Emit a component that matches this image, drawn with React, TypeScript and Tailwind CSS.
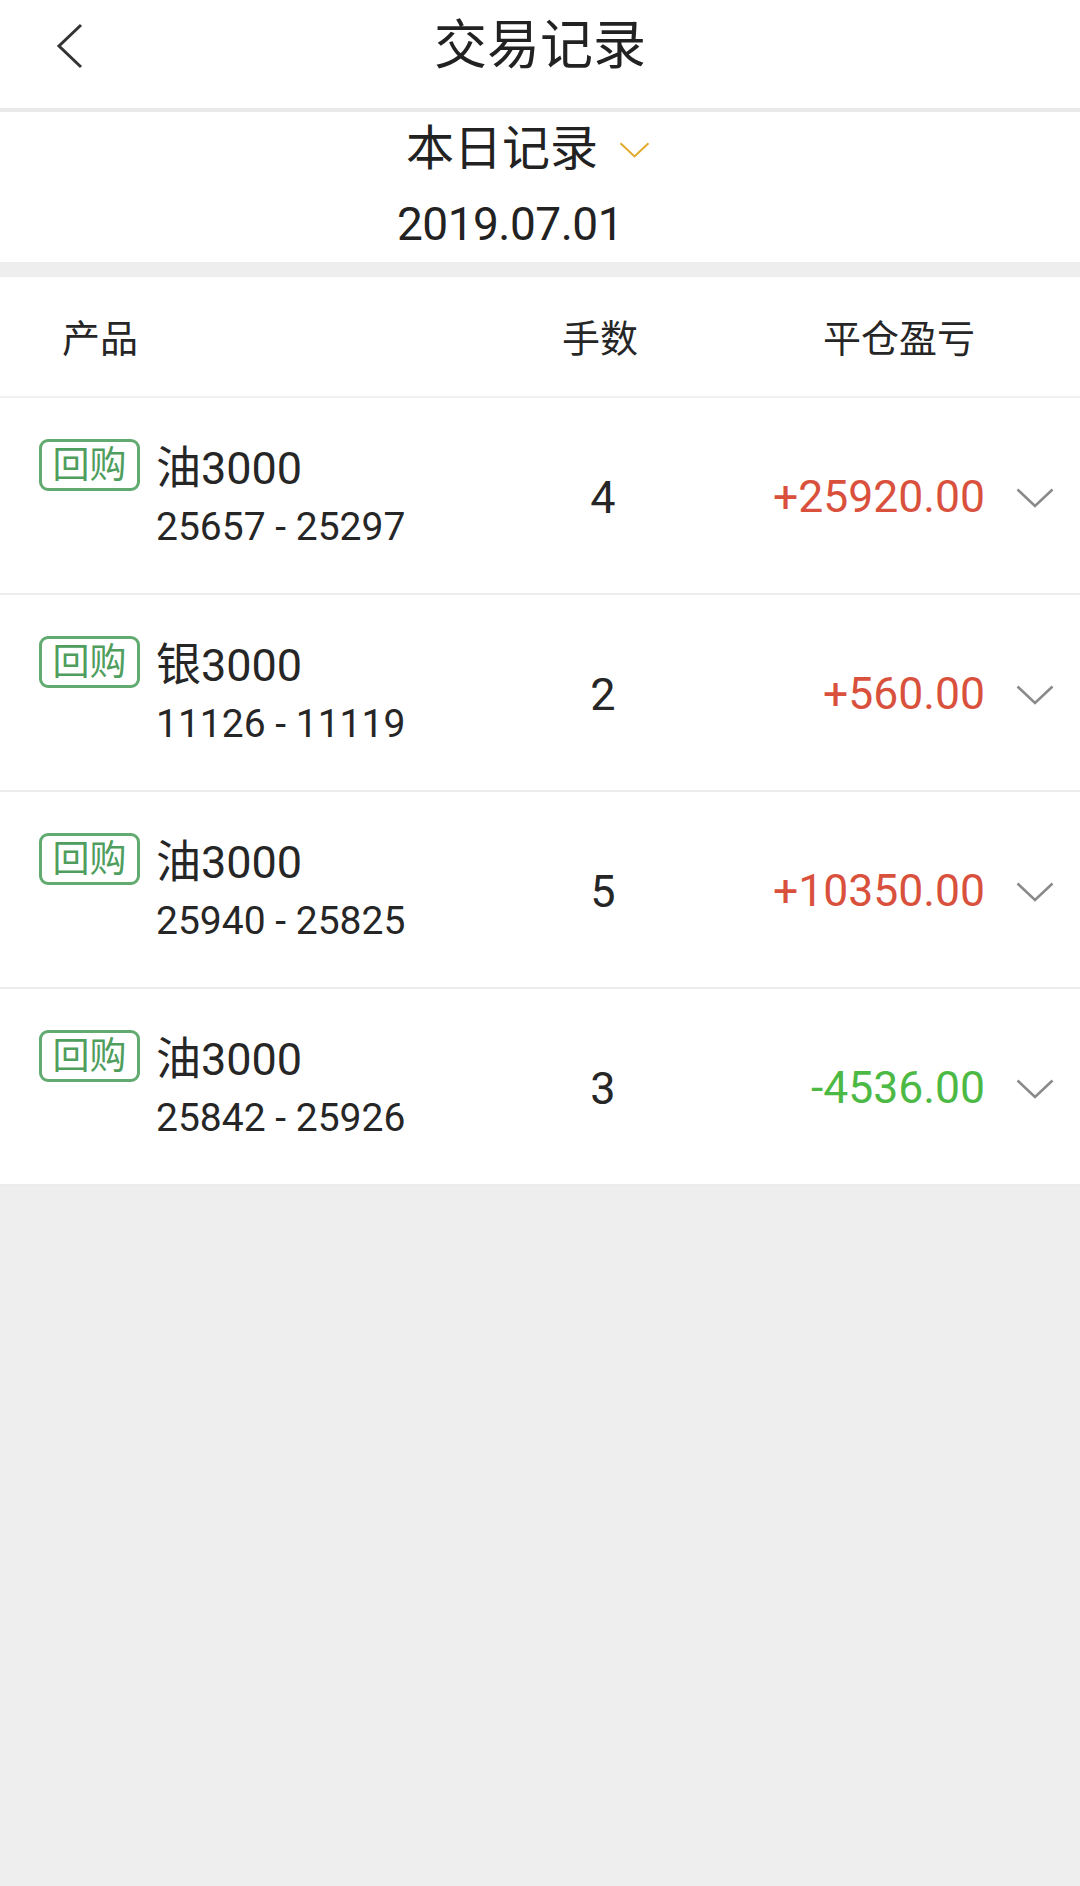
type Trade = {
  name: string;
  range: string;
  lots: number;
  pnl: string;
  up: boolean;
};

const trades: Trade[] = [
  { name: "油3000", range: "25657 - 25297", lots: 4, pnl: "+25920.00", up: true },
  { name: "银3000", range: "11126 - 11119", lots: 2, pnl: "+560.00", up: true },
  { name: "油3000", range: "25940 - 25825", lots: 5, pnl: "+10350.00", up: true },
  { name: "油3000", range: "25842 - 25926", lots: 3, pnl: "-4536.00", up: false },
];

const DownArrow = ({ className }: { className?: string }) => (
  <svg viewBox="0 0 38 20" className={className} fill="none" stroke="currentColor" strokeWidth="2.5">
    <path d="M1.5 1.5 L19 18 L36.5 1.5" />
  </svg>
);

const BackArrow = () => (
  <svg viewBox="0 0 30 46" className="h-[46px] w-[30px] text-[#333]" fill="none" stroke="currentColor" strokeWidth="3">
    <path d="M26 2 L4 23 L26 44" />
  </svg>
);

const TradeRow = ({ t }: { t: Trade }) => (
  <div className="flex h-[197px] border-b-2 border-[#ececec] bg-white">
    <div className="flex w-[500px] items-start pl-[39px]">
      <div className="mt-[41px] flex h-[52px] w-[101px] items-center justify-center rounded-[9px] border-[3px] border-[#62ab70] text-[37px] leading-none text-[#4f9e5e]">
        回购
      </div>
      <div className="ml-[16px] mt-[45px] flex flex-col">
        <span className="text-[45px] leading-[52px] text-[#262626]">{t.name}</span>
        <span className="mt-[9px] text-[39px] leading-[46px] text-[#262626]">{t.range}</span>
      </div>
    </div>
    <div className="flex w-[206px] items-center justify-center pt-[4px] text-[45px] text-[#262626]">{t.lots}</div>
    <div className="flex flex-1 items-center justify-end pr-[26px] pt-[4px]">
      <span className={t.up ? "text-[44.5px] text-[#d9513d]" : "text-[44.5px] text-[#4db945]"}>{t.pnl}</span>
      <DownArrow className="ml-[31px] h-[20px] w-[38px] text-[#8a8a8a]" />
    </div>
  </div>
);

export default function App() {
  return (
    <div
      className="min-h-[1886px] w-[1080px] bg-[#eeeeee]"
      style={{ fontFamily: 'Roboto, "Noto Sans CJK SC", sans-serif' }}
    >
      {/* top bar */}
      <div className="grid h-[108px] grid-cols-[1fr_auto_1fr] items-start bg-white pt-[14px]">
        <div className="pl-[55px] pt-[9px]">
          <BackArrow />
        </div>
        <h1 className="text-[53px] leading-[64px] text-[#222]">交易记录</h1>
        <div />
      </div>
      <div className="h-[4px] bg-[#e9e9e9]" />

      {/* date selector */}
      <div className="flex flex-col items-center bg-white pb-[14px] pt-[11px]">
        <div className="mr-[24px] flex items-center">
          <span className="text-[48px] leading-[52px] text-[#222]">本日记录</span>
          <DownArrow className="ml-[21px] mt-[2px] h-[16px] w-[31px] text-[#e3a92b]" />
        </div>
        <div className="mr-[60px] mt-[25px] text-[46px] leading-[48px] tracking-[-0.5px] text-[#222]">2019.07.01</div>
      </div>
      <div className="h-[15px] bg-[#eeeeee]" />

      {/* table header */}
      <div className="flex h-[121px] items-center border-b-2 border-[#f0f0f0] bg-white pt-[6px] text-[38px] text-[#262626]">
        <div className="w-[500px] pl-[62px]">产品</div>
        <div className="w-[200px] text-center">手数</div>
        <div className="flex-1 pl-[123px]">平仓盈亏</div>
      </div>

      {trades.map((t, i) => (
        <TradeRow key={i} t={t} />
      ))}
    </div>
  );
}
